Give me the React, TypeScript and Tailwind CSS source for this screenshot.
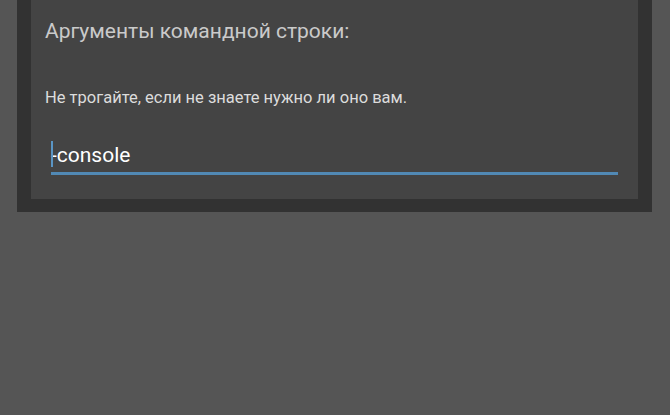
export default function App() {
  return (
    <div className="h-[415px] w-[670px] overflow-hidden bg-[#555555] pl-[17px] font-['Roboto',sans-serif]">
      <div className="w-[635px] bg-[#323232] px-[14px] pb-[13px]">
        <div className="h-[199px] bg-[#444444] pl-[14px] pr-[20px] pt-[17px]">
          <h2 className="text-[21px] leading-[28px] text-[#cacaca]">Аргументы командной строки:</h2>
          <p className="mt-[42px] text-[16.5px] leading-[22px] text-[#dcdcdc]">Не трогайте, если не знаете нужно ли оно вам.</p>
          <div className="relative ml-[6px] mt-[32px] border-b-[3px] border-[#5189b5] pb-[3px]">
            <span className="absolute left-0 top-0 h-[26px] w-[2px] bg-[#5a95c4]" />
            <span className="text-[21px] leading-[28px] text-white">-console</span>
          </div>
        </div>
      </div>
    </div>
  );
}
